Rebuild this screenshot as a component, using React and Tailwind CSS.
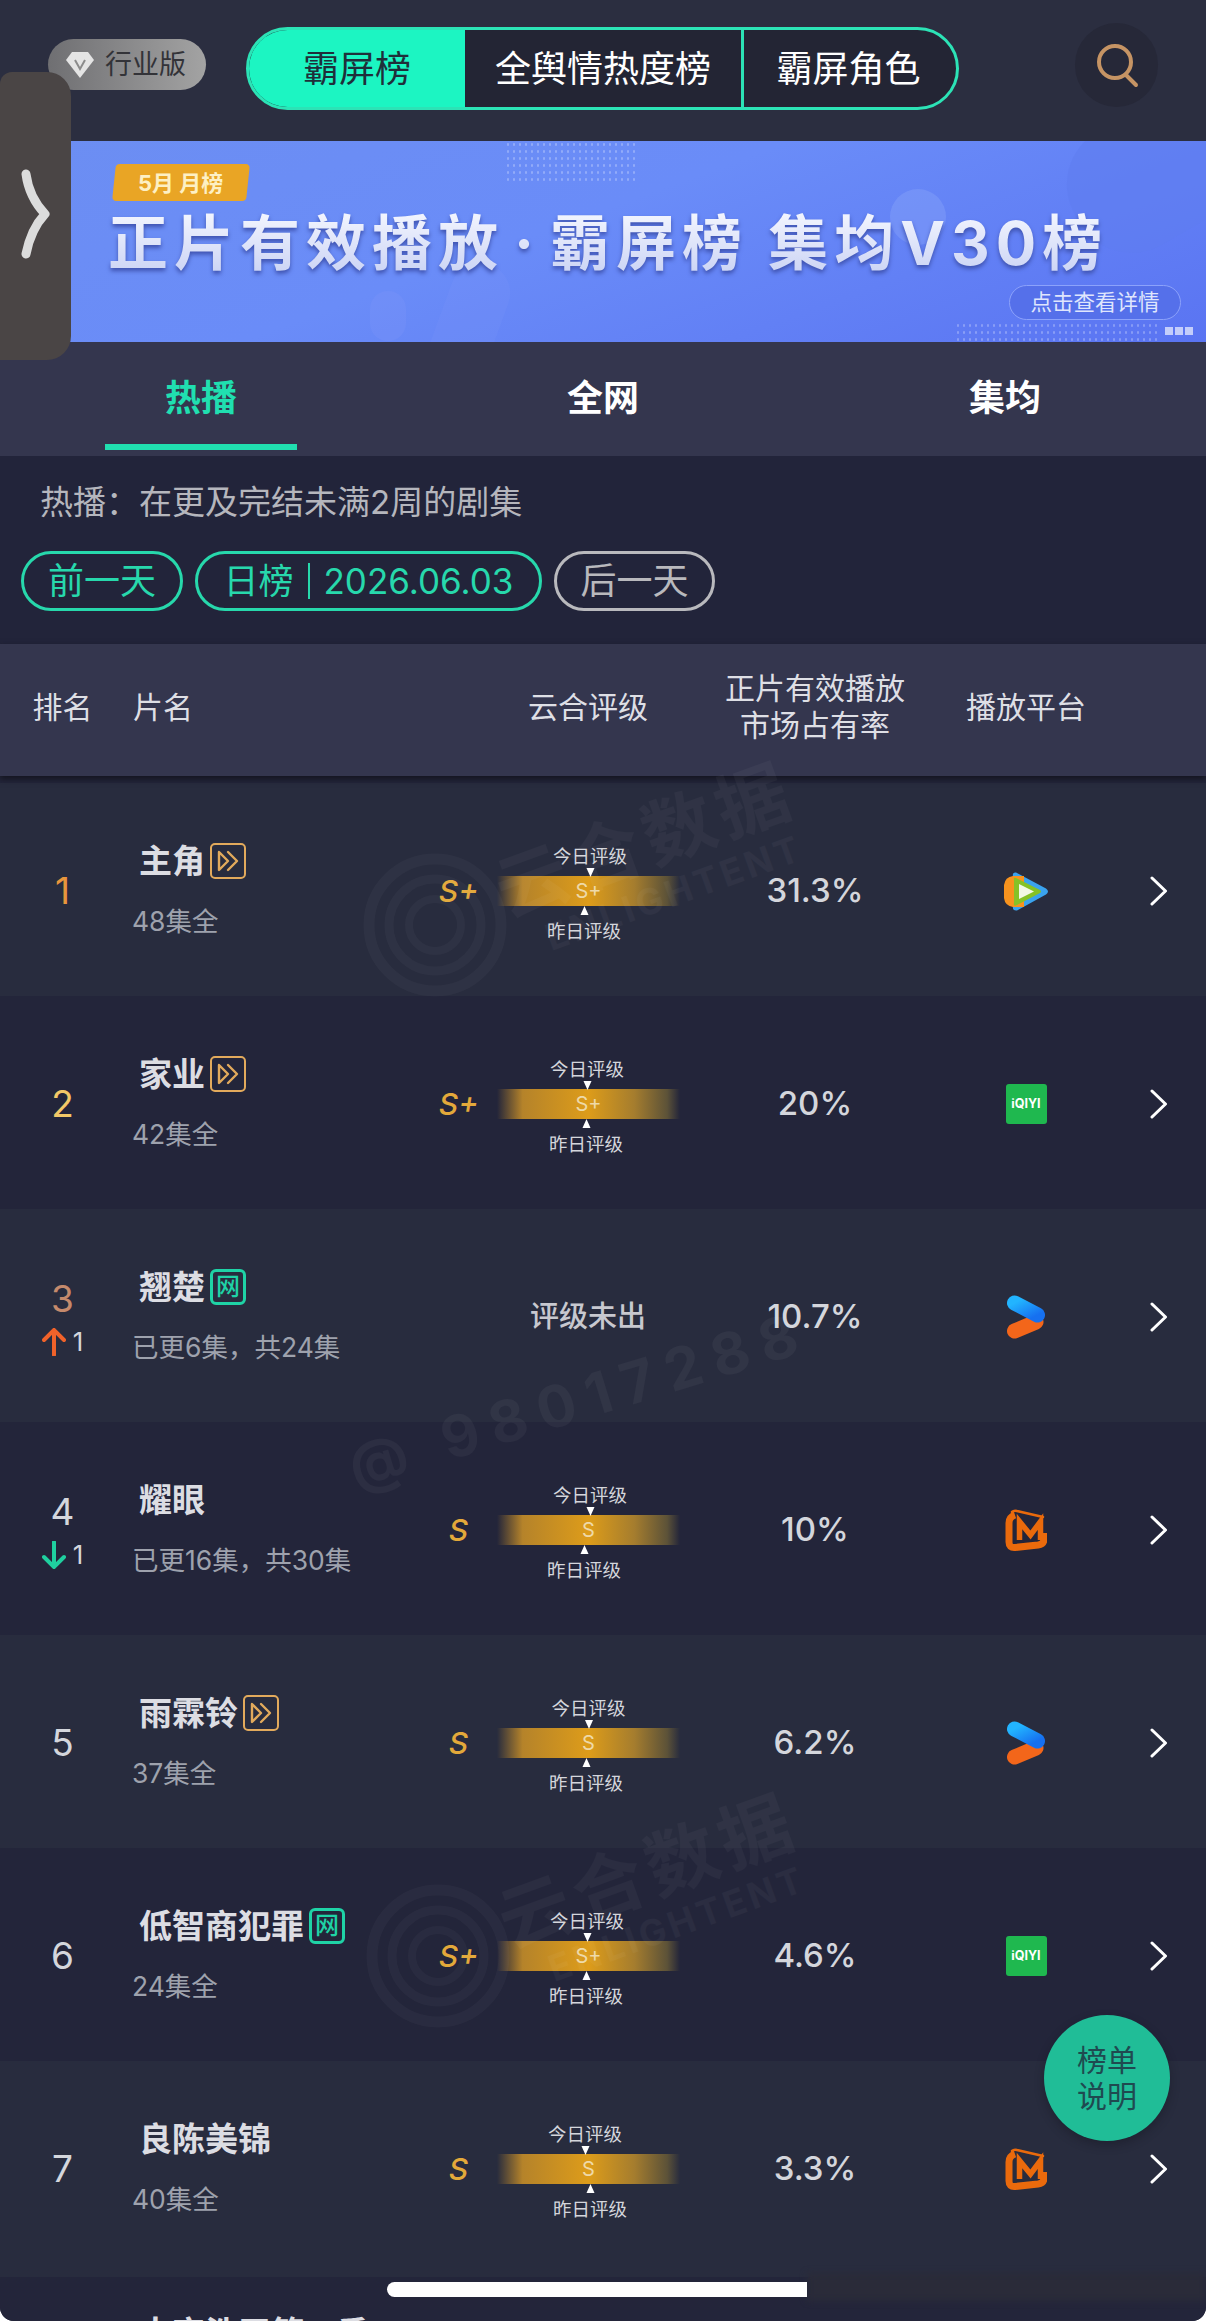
import React from "react";

const font = { fontFamily: 'Inter, "Noto Sans CJK SC", sans-serif' };

function TencentLogo() {
  return (
    <svg width="45" height="41" viewBox="0 0 45 41">
      <path d="M12 1.5Q8 1 9 6V35Q8 40 13 39.5L42 23.5Q46 20.5 42 17.5Z" fill="#3aa3ee" />
      <path d="M9 5Q1 6 0 14V27Q1 35 9 36L20 36V5Z" fill="#f7931e" />
      <path d="M12 7Q9 6 10 9V32Q9 36 13 34L36 22Q38 20.5 36 19Z" fill="#86c226" />
      <path d="M15 13L30 20.5L15 28Z" fill="#f2f8e4" />
    </svg>
  );
}
function IqiyiLogo() {
  return (
    <div className="flex h-[40px] w-[41px] items-center justify-center rounded-[3px] bg-[#1fb84f] text-[12.5px] font-bold leading-none text-white">
      iQIYI
    </div>
  );
}
function YoukuLogo() {
  return (
    <svg width="40" height="46" viewBox="0 0 40 46">
      <defs>
        <linearGradient id="yk" x1="0" y1="0" x2="1" y2="1">
          <stop offset="0" stopColor="#22b4ff" />
          <stop offset="1" stopColor="#1670f0" />
        </linearGradient>
      </defs>
      <path d="M8.5 37L30 28" stroke="#f3661a" strokeWidth="15" strokeLinecap="round" />
      <path d="M8.5 9L31.5 21" stroke="url(#yk)" strokeWidth="15" strokeLinecap="round" />
    </svg>
  );
}
function MangoLogo() {
  return (
    <svg width="42" height="43" viewBox="0 0 42 43" fill="none" stroke="#ea6a0c">
      <path d="M10 6Q4 8 4 14V33Q4 39 10 38.5L33 36Q39 35 39 30V24" strokeWidth="7" />
      <path d="M7 3Q9 1 12 2L38 8" strokeWidth="2.5" strokeLinecap="round" />
      <path d="M14.5 31V12.5L25.5 26L35.5 12.5V31" strokeWidth="5.5" strokeMiterlimit="8" />
    </svg>
  );
}
function Chevron() {
  return (
    <svg width="18" height="30" viewBox="0 0 18 30" fill="none">
      <path d="M2 2L15.5 15L2 28" stroke="#fff" strokeWidth="3" strokeLinecap="round" strokeLinejoin="round" />
    </svg>
  );
}
function Arrow({ up }) {
  const c = up ? "#f0622a" : "#1fcf9f";
  return (
    <svg width="24" height="28" viewBox="0 0 24 28" fill="none">
      {up ? (
        <path d="M12 27V2M2 12L12 2L22 12" stroke={c} strokeWidth="4" strokeLinecap="round" />
      ) : (
        <path d="M12 1V26M2 16L12 26L22 16" stroke={c} strokeWidth="4" strokeLinecap="round" />
      )}
    </svg>
  );
}
function Tag({ type }) {
  if (type === "net") {
    return (
      <span className="ml-[5px] flex h-[36px] w-[36px] items-center justify-center rounded-[6px] border-[3px] border-[#1fd3a6] text-[24px] font-medium leading-none text-[#1fd3a6]">
        网
      </span>
    );
  }
  return (
    <span className="ml-[5px] flex h-[36px] w-[36px] items-center justify-center rounded-[5px] border-[2.5px] border-[#e2aa5c]">
      <svg width="28" height="28" viewBox="0 0 28 28" fill="none" stroke="#e2aa5c" strokeWidth="2.4" strokeLinejoin="round" strokeLinecap="round">
        <path d="M5 5L14 14L5 23Z" />
        <path d="M14 5L23 14L14 23" />
      </svg>
    </span>
  );
}

function Rating({ grade, today, yest }) {
  return (
    <div className="flex w-[280px] items-center">
      <span className="w-[77px] text-center text-[30px] font-medium italic leading-none text-[#e3a93a]">{grade}</span>
      <div className="flex w-[183px] flex-col">
        <div className="h-[9px]" />
        <span className="h-[24px] text-center text-[18.5px] leading-[24px] text-[#d4d6dc]" style={{ transform: `translateX(${today}px)` }}>
          今日评级
        </span>
        <div className="flex h-[8px] justify-center" style={{ transform: `translateX(${today}px)` }}>
          <div className="h-0 w-0 border-x-[4px] border-t-[9px] border-x-transparent border-t-white" />
        </div>
        <div className="flex h-[30px] items-center justify-center bg-[linear-gradient(90deg,#d9991f00_0%,#b5832a_14%,#dd9c1a_50%,#a57d2e_75%,#5c5238_93%,#d9991f00_100%)] text-[20px] leading-none text-[#eed9a8]">
          {grade}
        </div>
        <div className="flex h-[9px] items-end justify-center" style={{ transform: `translateX(${yest}px)` }}>
          <div className="h-0 w-0 border-x-[4px] border-b-[9px] border-x-transparent border-b-white" />
        </div>
        <span className="h-[32px] text-center text-[18.5px] leading-[32px] text-[#d4d6dc]" style={{ transform: `translateX(${yest}px)` }}>
          昨日评级
        </span>
      </div>
    </div>
  );
}

const rows = [
  { rank: "1", color: "#e8963c", title: "主角", tag: "play", sub: "48集全", grade: "S+", today: 1.5, yest: -4.5, pct: "31.3%", logo: <TencentLogo /> },
  { rank: "2", color: "#f2c867", title: "家业", tag: "play", sub: "42集全", grade: "S+", today: -1.5, yest: -2.5, pct: "20%", logo: <IqiyiLogo /> },
  { rank: "3", color: "#c58a6c", title: "翘楚", tag: "net", sub: "已更6集，共24集", pct: "10.7%", logo: <YoukuLogo />, delta: "up" },
  { rank: "4", color: "#d4d6dc", title: "耀眼", sub: "已更16集，共30集", grade: "S", today: 1.5, yest: -4.5, pct: "10%", logo: <MangoLogo />, delta: "down" },
  { rank: "5", color: "#d4d6dc", title: "雨霖铃", tag: "play", sub: "37集全", grade: "S", today: 0, yest: -2.5, pct: "6.2%", logo: <YoukuLogo /> },
  { rank: "6", color: "#d4d6dc", title: "低智商犯罪", tag: "net", sub: "24集全", grade: "S+", today: -1.5, yest: -2.5, pct: "4.6%", logo: <IqiyiLogo /> },
  { rank: "7", color: "#d4d6dc", title: "良陈美锦", sub: "40集全", grade: "S", today: -3.5, yest: 1.5, pct: "3.3%", logo: <MangoLogo /> },
];

function Row({ r, i }) {
  const height = i === 6 ? "h-[216px] pb-[3px]" : "h-[213px]";
  return (
    <div className={`flex items-center pt-[3px] ${height} ${i % 2 === 0 ? "bg-[#282c3e]" : "bg-[#23253a]"}`}>
      <div className="flex w-[125px] flex-col items-center">
        <span className="text-[37px] leading-[44px]" style={{ color: r.color }}>{r.rank}</span>
        {r.delta && (
          <span className="mt-[6px] flex h-[30px] items-center gap-[7px] text-[26px] leading-none text-[#d4d6dc]">
            <Arrow up={r.delta === "up"} />1
          </span>
        )}
      </div>
      <div className="flex w-[295px] flex-col gap-[20px]">
        <div className="flex h-[40px] items-center pl-[14px] text-[33px] font-bold leading-[40px] text-[#dcdde3]">
          {r.title}
          {r.tag && <Tag type={r.tag} />}
        </div>
        <div className="h-[40px] pl-[7px] text-[26.5px] leading-[40px] text-[#9ea2ad]">{r.sub}</div>
      </div>
      {r.grade ? (
        <Rating grade={r.grade} today={r.today} yest={r.yest} />
      ) : (
        <div className="w-[280px] pl-[56px] text-center text-[29px] font-medium text-[#c7c8cf]">评级未出</div>
      )}
      <div className="w-[230px] text-center text-[33px] font-medium text-[#d4d6dc]">{r.pct}</div>
      <div className="flex w-[192px] justify-center">{r.logo}</div>
      <div className="pl-[28px]"><Chevron /></div>
    </div>
  );
}

function Watermark({ className }) {
  return (
    <div className={`pointer-events-none absolute ${className}`}>
      <svg width="170" height="170" viewBox="0 0 170 170" fill="none" stroke="#ffffff" strokeOpacity="0.03" className="absolute left-0 top-[60px]">
        <circle cx="80" cy="80" r="66" strokeWidth="11" />
        <circle cx="80" cy="80" r="46" strokeWidth="9" />
        <circle cx="80" cy="80" r="26" strokeWidth="8" />
      </svg>
      <div className="absolute left-[130px] top-[72px] w-[360px] origin-top-left -rotate-[20deg] text-white/[0.035]">
        <div className="text-[72px] font-bold leading-[78px] tracking-[6px]">云合数据</div>
        <div className="pl-[30px] text-[36px] font-bold leading-[40px] tracking-[4px]">ENLIGHTENT</div>
      </div>
    </div>
  );
}

export default function App() {
  return (
    <div className="relative h-[2321px] w-[1206px] overflow-hidden rounded-b-[14px] bg-[#23253a]" style={font}>
      {/* top bar */}
      <div className="flex h-[141px] items-start bg-[#2b2e40]">
        <div className="ml-[48px] mt-[39px] flex h-[51px] w-[158px] items-center rounded-[26px] bg-[linear-gradient(90deg,#6f6f72,#a3a3a3)] pl-[17px]">
          <svg width="30" height="28" viewBox="0 0 30 28">
            <path d="M7 1H23L29 9L15 27L1 9Z" fill="#e4e4e4" />
            <path d="M10 9L15 18L20 9" fill="none" stroke="#8b8b8b" strokeWidth="2" />
          </svg>
          <span className="ml-[10px] text-[27px] leading-none text-[#333338]">行业版</span>
        </div>
        <div className="ml-[40px] mt-[27px] flex h-[83px] w-[713px] overflow-hidden rounded-[42px] border-[3px] border-[#2ce3b6] bg-[#232534] text-[36px] leading-none text-white">
          <div className="flex w-[216px] items-center justify-center bg-[#1cf5c2] text-[36px] text-[#1f2f3a]">霸屏榜</div>
          <div className="flex w-[279px] items-center justify-center border-r-[3px] border-[#2ce3b6]">全舆情热度榜</div>
          <div className="flex flex-1 items-center justify-center pr-[3px]">霸屏角色</div>
        </div>
        <div className="ml-[116px] mt-[23px] flex h-[84px] w-[83px] items-center justify-center rounded-full bg-[#262838]">
          <svg width="44" height="46" viewBox="0 0 44 46" fill="none" stroke="#c69464" strokeWidth="4" strokeLinecap="round">
            <circle cx="20" cy="20" r="16" />
            <path d="M31 33L41 43" />
          </svg>
        </div>
      </div>

      {/* banner */}
      <div className="relative h-[201px] overflow-hidden bg-[linear-gradient(160deg,#6c8ef2_0%,#6a8cf8_45%,#5a74f2_100%)] pl-[108px]">
        <div className="absolute left-[505px] top-0 h-[40px] w-[132px] bg-[radial-gradient(circle,#ffffff44_1px,transparent_1.5px)] bg-[length:6px_7px]" />
        <div className="absolute left-[955px] top-[181px] h-[20px] w-[205px] bg-[radial-gradient(circle,#ffffff44_1px,transparent_1.5px)] bg-[length:6px_7px]" />
        <div className="absolute right-[-30px] top-[-30px] h-[130px] w-[170px] rotate-[-30deg] rounded-[60px] bg-[#5f7df0]/60" />
        <div className="absolute left-[890px] top-[48px] h-[56px] w-[56px] rounded-full bg-[#8aa4fa]/40" />
        <div className="absolute left-[370px] top-[150px] h-[50px] w-[36px] rounded-full bg-[#7f96f8]/30" />
        <div className="absolute left-[440px] top-[120px] h-[120px] w-[60px] rotate-[20deg] rounded-[30px] bg-[#7b98fb]/20" />
        <div className="relative ml-[6px] mt-[23px] flex h-[37px] w-[134px] -skew-x-[6deg] items-center justify-center rounded-[4px] bg-[#e9a525]">
          <span className="skew-x-[6deg] text-[22px] font-bold leading-none text-[#fdf0c4]">5月 月榜</span>
        </div>
        <div className="relative mt-[6px] w-fit whitespace-nowrap bg-[linear-gradient(180deg,#f6f8ff,#c8d1f4)] bg-clip-text text-[60px] font-bold leading-[72px] tracking-[6px] text-transparent drop-shadow-[0_3px_2px_#3f53b0]">
          正片有效播放<span className="mx-[10px]">·</span>霸屏榜 集均V30榜
        </div>
        <div className="absolute left-[1009px] top-[144px] flex h-[35px] w-[172px] items-center justify-center rounded-[18px] border border-[#8ca2fb] bg-[#5570ea] text-[21.5px] leading-none text-[#dfe5fd]">
          点击查看详情
        </div>
        <div className="absolute left-[1165px] top-[186px] flex gap-[2px]">
          <div className="h-[8px] w-[8px] bg-[#c3cdfb]" />
          <div className="h-[8px] w-[8px] bg-[#c3cdfb]" />
          <div className="h-[8px] w-[8px] bg-[#c3cdfb]" />
        </div>
      </div>

      {/* tabs */}
      <div className="flex h-[114px] bg-[#34364e] text-[36px] font-bold leading-none text-white">
        <div className="flex w-[402px] flex-col items-center pt-[38px]">
          <span className="text-[#20dfb0]">热播</span>
          <div className="mt-[28px] h-[6px] w-[192px] bg-[#20dfb0]" />
        </div>
        <div className="flex w-[402px] justify-center pt-[38px]">全网</div>
        <div className="flex w-[402px] justify-center pt-[38px]">集均</div>
      </div>

      {/* info */}
      <div className="h-[188px] bg-[#22243a] pl-[21px]">
        <div className="pl-[19px] pt-[26px] text-[33px] leading-[40px] text-[#b5b6bd]">热播：在更及完结未满2周的剧集</div>
        <div className="mt-[29px] flex gap-[12px] text-[36px] leading-none">
          <div className="flex h-[60px] w-[162px] items-center justify-center rounded-[30px] border-[3px] border-[#27d8ac] text-[#27d8ac]">前一天</div>
          <div className="flex h-[60px] w-[347px] items-center justify-center rounded-[30px] border-[3px] border-[#27d8ac] text-[35px] text-[#27d8ac]">
            日榜<span className="mx-[14px] h-[36px] w-[2px] bg-[#27d8ac]" />2026.06.03
          </div>
          <div className="flex h-[60px] w-[161px] items-center justify-center rounded-[30px] border-[3px] border-[#b9b9bd] text-[#b9b9bd]">后一天</div>
        </div>
      </div>

      {/* header */}
      <div className="relative flex h-[132px] items-center bg-[#34364e] pb-[6px] text-[30px] leading-[37px] text-[#dedfe5] shadow-[0_3px_6px_#14151f]">
        <div className="w-[125px] text-center">排名</div>
        <div className="w-[295px] pl-[8px]">片名</div>
        <div className="w-[280px] pl-[56px] text-center">云合评级</div>
        <div className="w-[230px] text-center">正片有效播放<br />市场占有率</div>
        <div className="w-[192px] text-center">播放平台</div>
      </div>

      {/* list */}
      <div className="h-[7px] bg-[#23253a]" />
      {rows.map((r, i) => (
        <Row key={r.rank} r={r} i={i} />
      ))}
      <div className="h-[60px] bg-[#23253a] pl-[139px] pt-[36px] text-[33px] font-bold leading-[40px] text-[#dcdde3]">大宋浩平第一季</div>

      {/* watermarks */}
      <Watermark className="left-[355px] top-[785px] h-[240px] w-[500px]" />
      <Watermark className="left-[358px] top-[1816px] h-[240px] w-[500px]" />
      <div className="pointer-events-none absolute left-[350px] top-[1440px] origin-left -rotate-[17deg] whitespace-nowrap text-[58px] font-bold leading-none tracking-[12px] text-white/[0.045]">
        @ 98017288
      </div>

      {/* side handle */}
      <div className="absolute left-0 top-[72px] flex h-[288px] w-[71px] items-center rounded-r-[24px] rounded-tl-[12px] bg-[#4a4545]">
        <svg width="34" height="90" viewBox="0 0 34 90" fill="none" className="ml-[19px] -translate-y-[2px]">
          <path d="M7 5Q10 28 26 45Q12 60 7 85" stroke="#dcdcdc" strokeWidth="9" strokeLinecap="round" strokeLinejoin="round" />
        </svg>
      </div>

      {/* floating button */}
      <div className="absolute left-[1044px] top-[2015px] flex h-[126px] w-[126px] items-center justify-center rounded-full bg-[#20bd97] text-center text-[30px] leading-[36px] text-[#1f4a50] shadow-[0_4px_10px_#14151f66]">
        榜单<br />说明
      </div>

      {/* home indicator */}
      <div className="absolute left-[807px] top-[2273px] h-[28px] w-[399px] bg-[#2a2b39] blur-[3px]" />
      <div className="absolute left-[387px] top-[2282px] h-[15px] w-[420px] rounded-l-[8px] bg-white" />
    </div>
  );
}
